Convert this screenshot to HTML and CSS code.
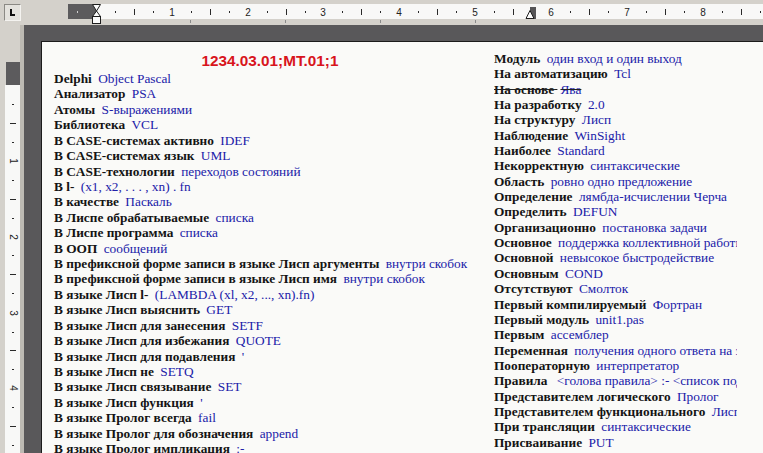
FILE: index.html
```html
<!DOCTYPE html>
<html lang="ru">
<head>
<meta charset="utf-8">
<title>Документ</title>
<link rel="stylesheet" href="styles.css">
</head>
<body>
<div class="window">
  <div class="topbar">
    <div class="tabbox"><span class="tabmark"></span></div>
    <svg class="hruler" width="695" height="25" viewBox="0 0 695 25">
      <rect x="0" y="4" width="28" height="15" fill="#5c5b5d"/>
      <rect x="28" y="4" width="667" height="15" fill="#f8f8f7"/>
      <g fill="#2a2a2a">
        <rect x="9" y="11" width="1" height="2" fill="#d0d0d0"/>
        <rect x="47" y="11" width="1" height="2"/>
        <rect x="66" y="9" width="1" height="6"/>
        <rect x="85" y="11" width="1" height="2"/>
        <rect x="123" y="11" width="1" height="2"/>
        <rect x="142" y="9" width="1" height="6"/>
        <rect x="161" y="11" width="1" height="2"/>
        <rect x="199" y="11" width="1" height="2"/>
        <rect x="218" y="9" width="1" height="6"/>
        <rect x="237" y="11" width="1" height="2"/>
        <rect x="274" y="11" width="1" height="2"/>
        <rect x="293" y="9" width="1" height="6"/>
        <rect x="312" y="11" width="1" height="2"/>
        <rect x="350" y="11" width="1" height="2"/>
        <rect x="369" y="9" width="1" height="6"/>
        <rect x="388" y="11" width="1" height="2"/>
        <rect x="426" y="11" width="1" height="2"/>
        <rect x="445" y="9" width="1" height="6"/>
        <rect x="502" y="11" width="1" height="2"/>
        <rect x="521" y="9" width="1" height="6"/>
        <rect x="540" y="11" width="1" height="2"/>
        <rect x="578" y="11" width="1" height="2"/>
        <rect x="597" y="9" width="1" height="6"/>
        <rect x="616" y="11" width="1" height="2"/>
        <rect x="654" y="11" width="1" height="2"/>
        <rect x="673" y="9" width="1" height="6"/>
        <rect x="692" y="11" width="1" height="2"/>
      </g>
      <g class="rnum" text-anchor="middle">
        <text x="104" y="16">1</text>
        <text x="180" y="16">2</text>
        <text x="255" y="16">3</text>
        <text x="331" y="16">4</text>
        <text x="407" y="16">5</text>
        <text x="483" y="16">6</text>
        <text x="559" y="16">7</text>
        <text x="635" y="16">8</text>
      </g>
      <g fill="#8a8a8a">
        <rect x="122" y="20" width="1" height="3"/>
        <rect x="217" y="20" width="1" height="3"/>
        <rect x="312" y="20" width="1" height="3"/>
        <rect x="407" y="20" width="1" height="3"/>
      </g>
      <g fill="#fbfbfb" stroke="#1e1e1e" stroke-width="1">
        <path d="M24.5 4.5 H32.5 L28.5 11 Z"/>
        <path d="M28.5 11 L24.5 16.5 H32.5 Z"/>
        <rect x="24.5" y="16.5" width="8" height="7"/>
      </g>
      <rect x="462" y="7" width="6" height="12" fill="#565557"/>
      <path d="M462 10.5 L458 18.5 H466 Z" fill="#fbfbfb" stroke="#1e1e1e" stroke-width="1"/>
    </svg>
  </div>
  <div class="main">
    <div class="vruler">
      <svg width="24" height="428" viewBox="0 0 24 428">
        <rect x="20" y="0" width="4" height="428" fill="#bdbab3"/>
        <rect x="6" y="37" width="14" height="23" fill="#5c5b5d"/>
        <rect x="5" y="60" width="15" height="368" fill="#f8f8f7"/>
        <g fill="#2a2a2a">
          <rect x="12" y="79" width="2" height="1"/>
          <rect x="10" y="98" width="6" height="1"/>
          <rect x="12" y="117" width="2" height="1"/>
          <rect x="12" y="155" width="2" height="1"/>
          <rect x="10" y="174" width="6" height="1"/>
          <rect x="12" y="193" width="2" height="1"/>
          <rect x="12" y="230" width="2" height="1"/>
          <rect x="10" y="249" width="6" height="1"/>
          <rect x="12" y="268" width="2" height="1"/>
          <rect x="12" y="307" width="2" height="1"/>
          <rect x="10" y="325" width="6" height="1"/>
          <rect x="12" y="344" width="2" height="1"/>
          <rect x="12" y="382" width="2" height="1"/>
          <rect x="10" y="401" width="6" height="1"/>
          <rect x="12" y="420" width="2" height="1"/>
        </g>
        <g class="rnum" text-anchor="middle">
          <text transform="translate(10 136) rotate(90)">1</text>
          <text transform="translate(10 212) rotate(90)">2</text>
          <text transform="translate(10 288) rotate(90)">3</text>
          <text transform="translate(10 363) rotate(90)">4</text>
        </g>
      </svg>
    </div>
    <div class="workspace">
      <div class="page">
        <div class="col col-left">
          <div class="title">1234.03.01;MT.01;1</div>
          <div class="row"><b>Delphi</b> <span class="a">Object Pascal</span></div>
          <div class="row"><b>Анализатор</b> <span class="a">PSA</span></div>
          <div class="row"><b>Атомы</b> <span class="a">S-выражениями</span></div>
          <div class="row"><b>Библиотека</b> <span class="a">VCL</span></div>
          <div class="row"><b>В CASE-системах активно</b> <span class="a">IDEF</span></div>
          <div class="row"><b>В CASE-системах язык</b> <span class="a">UML</span></div>
          <div class="row"><b>В CASE-технологии</b> <span class="a">переходов состояний</span></div>
          <div class="row"><b>В l-</b> <span class="a">(x1, x2, . . . , xn) . fn</span></div>
          <div class="row"><b>В качестве</b> <span class="a">Паскаль</span></div>
          <div class="row"><b>В Лиспе обрабатываемые</b> <span class="a">списка</span></div>
          <div class="row"><b>В Лиспе программа</b> <span class="a">списка</span></div>
          <div class="row"><b>В ООП</b> <span class="a">сообщений</span></div>
          <div class="row"><b>В префиксной форме записи в языке Лисп аргументы</b> <span class="a">внутри скобок</span></div>
          <div class="row"><b>В префиксной форме записи в языке Лисп имя</b> <span class="a">внутри скобок</span></div>
          <div class="row"><b>В языке Лисп l-</b> <span class="a">(LAMBDA (xl, x2, ..., xn).fn)</span></div>
          <div class="row"><b>В языке Лисп выяснить</b> <span class="a">GET</span></div>
          <div class="row"><b>В языке Лисп для занесения</b> <span class="a">SETF</span></div>
          <div class="row"><b>В языке Лисп для избежания</b> <span class="a">QUOTE</span></div>
          <div class="row"><b>В языке Лисп для подавления</b> <span class="a">'</span></div>
          <div class="row"><b>В языке Лисп не</b> <span class="a">SETQ</span></div>
          <div class="row"><b>В языке Лисп связывание</b> <span class="a">SET</span></div>
          <div class="row"><b>В языке Лисп функция</b> <span class="a">'</span></div>
          <div class="row"><b>В языке Пролог всегда</b> <span class="a">fail</span></div>
          <div class="row"><b>В языке Пролог для обозначения</b> <span class="a">append</span></div>
          <div class="row"><b>В языке Пролог импликация</b> <span class="a">:-</span></div>
        </div>
        <div class="col col-right">
          <div class="row"><b>Модуль</b> <span class="a">один вход и один выход</span></div>
          <div class="row"><b>На автоматизацию</b> <span class="a">Tcl</span></div>
          <div class="row row-struck"><b>На основе</b> <span class="a">Ява</span></div>
          <div class="row"><b>На разработку</b> <span class="a">2.0</span></div>
          <div class="row"><b>На структуру</b> <span class="a">Лисп</span></div>
          <div class="row"><b>Наблюдение</b> <span class="a">WinSight</span></div>
          <div class="row"><b>Наиболее</b> <span class="a">Standard</span></div>
          <div class="row"><b>Некорректную</b> <span class="a">синтаксические</span></div>
          <div class="row"><b>Область</b> <span class="a">ровно одно предложение</span></div>
          <div class="row"><b>Определение</b> <span class="a">лямбда-исчислении Черча</span></div>
          <div class="row"><b>Определить</b> <span class="a">DEFUN</span></div>
          <div class="row"><b>Организационно</b> <span class="a">постановка задачи</span></div>
          <div class="row"><b>Основное</b> <span class="a">поддержка коллективной работы</span></div>
          <div class="row"><b>Основной</b> <span class="a">невысокое быстродействие</span></div>
          <div class="row"><b>Основным</b> <span class="a">COND</span></div>
          <div class="row"><b>Отсутствуют</b> <span class="a">Смолток</span></div>
          <div class="row"><b>Первый компилируемый</b> <span class="a">Фортран</span></div>
          <div class="row"><b>Первый модуль</b> <span class="a">unit1.pas</span></div>
          <div class="row"><b>Первым</b> <span class="a">ассемблер</span></div>
          <div class="row"><b>Переменная</b> <span class="a">получения одного ответа на запрос</span></div>
          <div class="row"><b>Пооператорную</b> <span class="a">интерпретатор</span></div>
          <div class="row"><b>Правила</b> <span class="a a-wide">&lt;голова правила&gt; :- &lt;список подцелей&gt;</span></div>
          <div class="row"><b>Представителем логического</b> <span class="a">Пролог</span></div>
          <div class="row"><b>Представителем функционального</b> <span class="a">Лисп</span></div>
          <div class="row"><b>При трансляции</b> <span class="a">синтаксические</span></div>
          <div class="row"><b>Присваивание</b> <span class="a">PUT</span></div>
        </div>
      </div>
    </div>
  </div>
</div>
</body>
</html>
```

FILE: styles.css
```css
html, body {
  margin: 0;
  padding: 0;
  width: 763px;
  height: 453px;
  overflow: hidden;
  background: #d4d1cb;
}

.window {
  display: flex;
  flex-direction: column;
  width: 763px;
  height: 453px;
  overflow: hidden;
}

.topbar {
  display: flex;
  align-items: flex-start;
  height: 25px;
  flex: none;
  background: #d4d1cb;
}

.tabbox {
  box-sizing: border-box;
  width: 17px;
  height: 17px;
  margin: 4px 0 0 4px;
  border: 1px solid #8b8984;
  border-right-color: #f4f3f0;
  border-bottom-color: #f4f3f0;
  background: #e4e2dd;
  position: relative;
}

.tabmark {
  position: absolute;
  left: 5px;
  top: 4px;
  width: 3px;
  height: 5px;
  border-left: 2px solid #111;
  border-bottom: 2px solid #111;
}

.hruler {
  display: block;
  margin-left: auto;
}

.rnum {
  font-family: "Liberation Sans", Arial, sans-serif;
  font-size: 10px;
  fill: #222;
}

.main {
  flex: 1;
  display: flex;
  min-height: 0;
}

.vruler {
  width: 24px;
  flex: none;
  background: #d4d1cb;
}

.vruler svg {
  display: block;
}

.workspace {
  flex: 1;
  min-width: 0;
  background: #59585a;
  padding: 16px 0 0 17px;
  overflow: hidden;
}

.page {
  display: flex;
  width: 900px;
  height: 600px;
  background: #fafaf8;
  border-top: 1px solid #1b1b1b;
  border-left: 1px solid #1b1b1b;
  padding: 9px 0 0 12px;
  box-sizing: border-box;
  font-family: "Liberation Serif", "Times New Roman", serif;
  font-size: 13.33px;
  line-height: 15.35px;
  color: #141414;
}

.col {
  display: flex;
  flex-direction: column;
  flex: none;
}

.col-left {
  width: 440px;
  line-height: 15.42px;
}

.col-right {
  width: 243px;
  overflow: hidden;
}

.title {
  font-family: "Liberation Sans", Arial, sans-serif;
  font-weight: bold;
  font-size: 15.3px;
  line-height: 18px;
  padding-top: 1px;
  padding-bottom: 1px;
  color: #d8141c;
  text-align: center;
  padding-right: 8px;
}

.row {
  white-space: nowrap;
}

.row b {
  font-weight: bold;
}

.a {
  color: #2020a8;
  margin-left: 3px;
}

.a-wide {
  margin-left: 6px;
}

.row-struck {
  text-decoration: line-through;
  text-decoration-color: #222;
}
```
